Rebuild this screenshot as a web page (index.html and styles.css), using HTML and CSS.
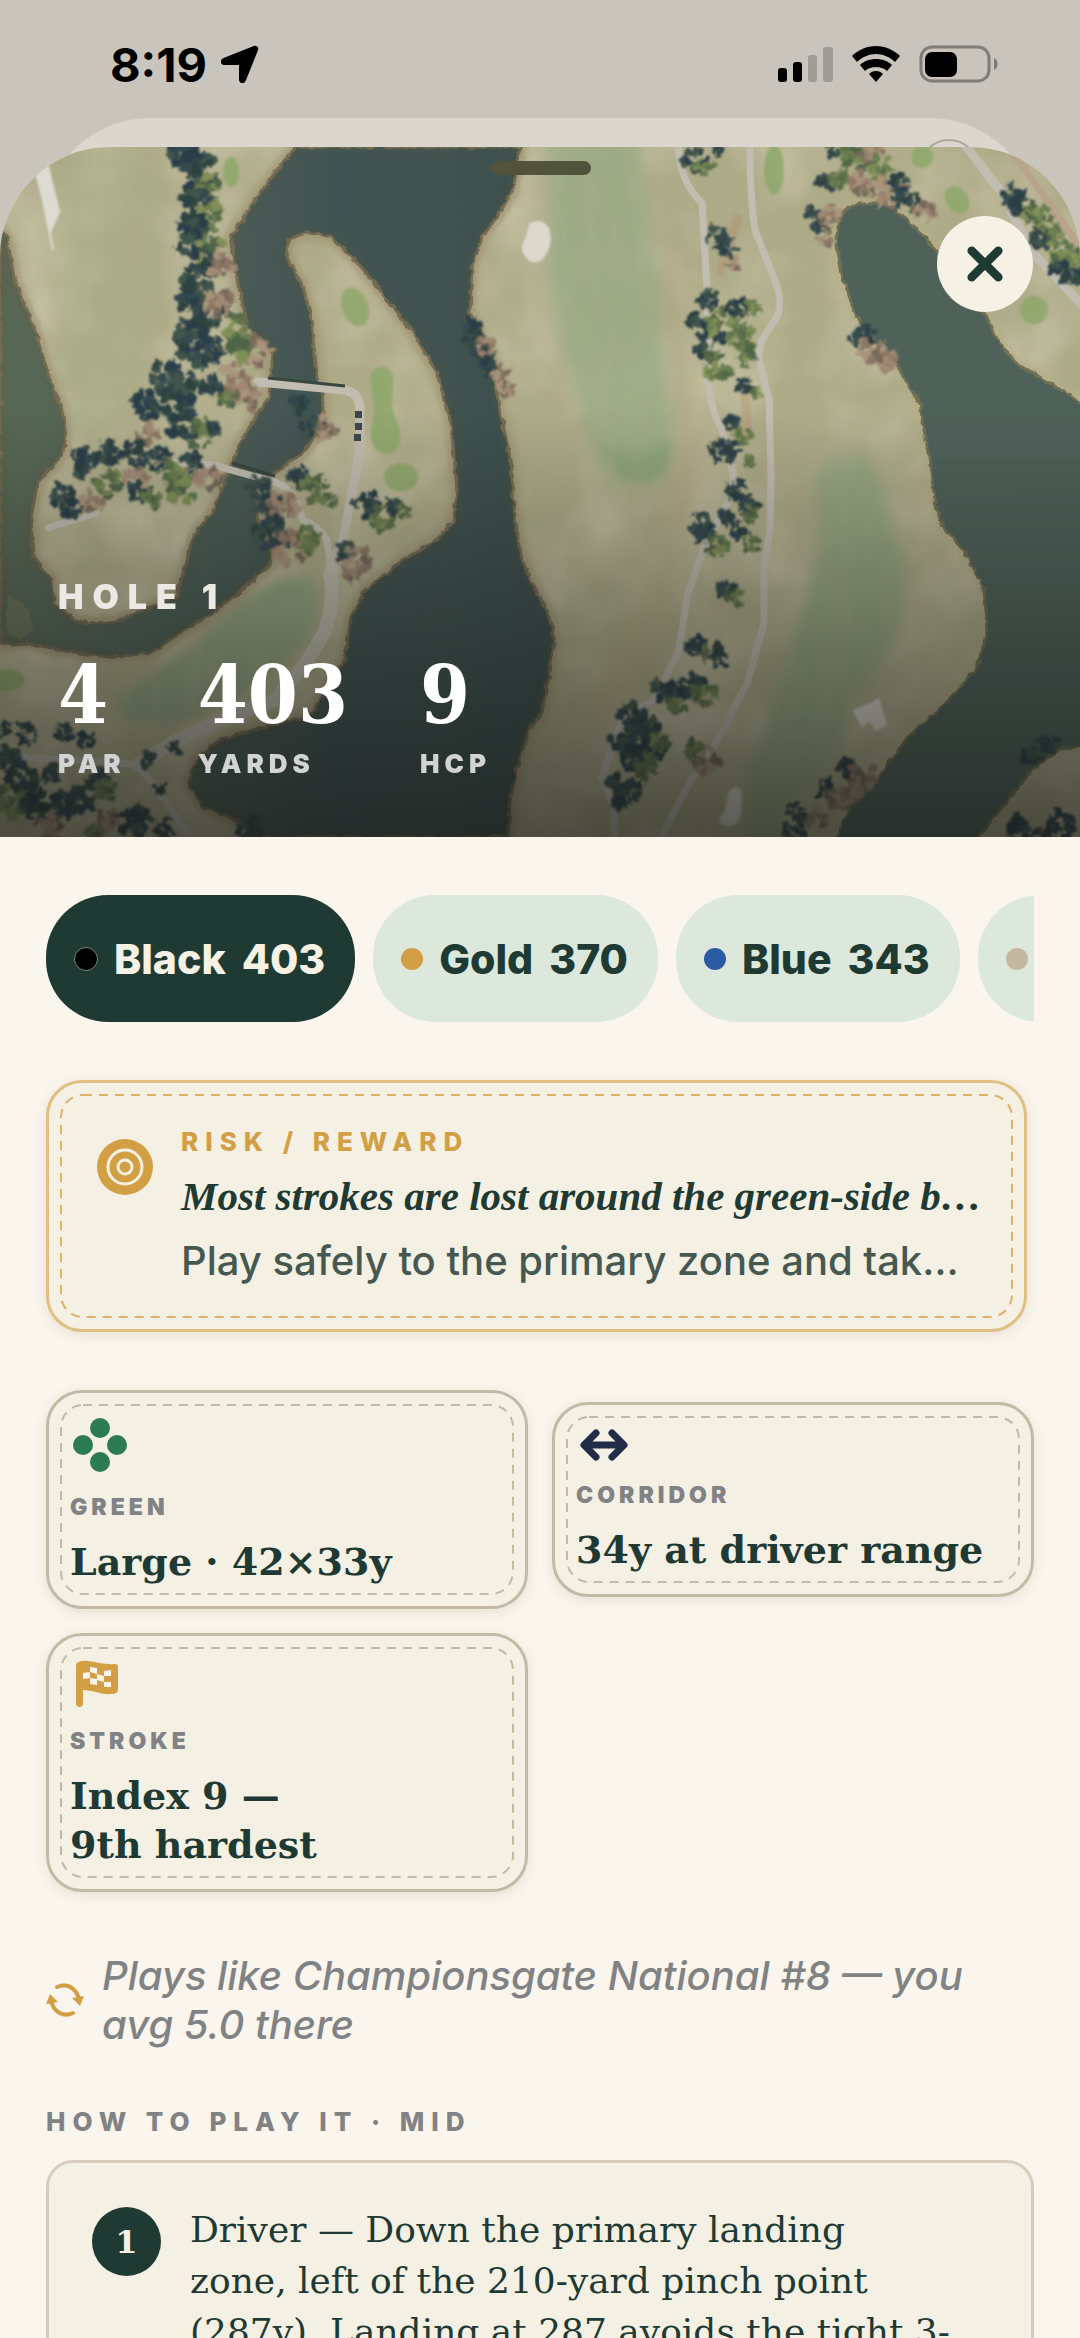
FILE: index.html
```html
<!DOCTYPE html>
<html lang="en">
<head>
  <meta charset="UTF-8">
  <meta name="viewport" content="width=device-width, initial-scale=1.0">
  <title>Hole 1</title>
  <link rel="stylesheet" href="styles.css">
</head>
<body>
  <div class="screen">
    <header class="status-bar">
      <div class="status-left">
        <span class="clock">8:19</span>
        <svg class="location" viewBox="0 0 38 38" aria-hidden="true">
          <path d="M36 5 24 35c-1 3-5 3-5-1V20c0-1 0-1-1-1H4c-4 0-4-4-1-5L33 2c2-1 4 1 3 3z" stroke="#000" stroke-width="2"/>
        </svg>
      </div>
      <svg class="status-icons" viewBox="0 0 222 38" aria-hidden="true">
        <rect x="0" y="23" width="9" height="14" rx="3"/>
        <rect x="15" y="17" width="9" height="20" rx="3"/>
        <rect x="30" y="10" width="9" height="27" rx="3" fill="#9f9d97"/>
        <rect x="45" y="2" width="10" height="35" rx="3" fill="#9f9d97"/>
        <path d="M98 1c-9 0-18 4-24 10l5 6c5-5 12-8 19-8s14 3 19 8l5-6C116 5 107 1 98 1z"/>
        <path d="M98 14c-6 0-12 2-16 6l5 6c3-3 7-4 11-4s8 1 11 4l5-6c-4-4-10-6-16-6z"/>
        <path d="M98 26c-3 0-5 1-7 3l7 8 7-8c-2-2-4-3-7-3z"/>
        <rect x="143" y="2" width="68" height="34" rx="11" fill="none" stroke="#7f7d78" stroke-width="3"/>
        <rect x="147" y="7" width="32" height="25" rx="7"/>
        <path d="M216 13c5 2 5 10 0 12z" fill="#7f7d78"/>
      </svg>
    </header>

    <!-- Sheet underneath the open one -->
    <div class="back-sheet">
      <span class="back-close"></span>
    </div>

    <main class="sheet">
      <section class="hero">
        <svg class="aerial" viewBox="0 147 1080 690" preserveAspectRatio="xMidYMid slice" aria-hidden="true">
          <defs>
            <filter id="rough" x="-5%" y="-5%" width="110%" height="110%">
              <feTurbulence type="fractalNoise" baseFrequency="0.12" numOctaves="2" seed="4" result="n"/>
              <feDisplacementMap in="SourceGraphic" in2="n" scale="6" xChannelSelector="R" yChannelSelector="G"/>
            </filter>
            <filter id="leafy" x="-5%" y="-5%" width="110%" height="110%">
              <feTurbulence type="fractalNoise" baseFrequency="0.14" numOctaves="2" seed="9" result="n"/>
              <feDisplacementMap in="SourceGraphic" in2="n" scale="11" xChannelSelector="R" yChannelSelector="G" result="d"/>
              <feGaussianBlur in="d" stdDeviation="1"/>
            </filter>
            <filter id="soft" x="-20%" y="-20%" width="140%" height="140%"><feGaussianBlur stdDeviation="8"/></filter>
            <filter id="haze"><feGaussianBlur stdDeviation="1.2"/></filter>
            <filter id="glow"><feGaussianBlur stdDeviation="4"/></filter>
            <filter id="streaks" x="0" y="0" width="100%" height="100%">
              <feTurbulence type="fractalNoise" baseFrequency="0.06 0.014" numOctaves="4" seed="12"/>
              <feColorMatrix values="0 0 0 0 0.42  0 0 0 0 0.43  0 0 0 0 0.28  2.2 0 0 0 -0.9"/>
            </filter>
            <filter id="patches" x="0" y="0" width="100%" height="100%">
              <feTurbulence type="fractalNoise" baseFrequency="0.012" numOctaves="3" seed="3"/>
              <feColorMatrix values="0 0 0 0 0.74  0 0 0 0 0.68  0 0 0 0 0.53  0 2.2 0 0 -0.8"/>
            </filter>
            <linearGradient id="water" x1="0" y1="0" x2="1" y2="0">
              <stop offset="0" stop-color="#5a6856"/>
              <stop offset="0.2" stop-color="#53655b"/>
              <stop offset="0.6" stop-color="#415452"/>
              <stop offset="1" stop-color="#3d504f"/>
            </linearGradient>
            <path id="lake" d="M296 147H520L513 190 497 217 482 237 472 267 470 313 480 338 492 357 499 407 510 457 515 517 520 553 530 580 540 597 550 620 554 643 547 687 540 717 530 727 517 767 510 800 508 837H262L238 820 203 807 189 783 196 760 220 740 262 727 310 717 344 660 351 617 365 590 399 563 437 540 453 521 457 490 451 423 437 373 413 333 382 293 358 263 331 237 306 232 289 240 287 258 303 287 310 313 317 373 322 390 324 423 306 450 275 473 255 487 258 523 272 550 272 563 241 590 213 613 179 633 152 653 107 657 59 650 28 643 0 645V230L7 237 15 283 34 327 48 373 62 410 66 436 62 455 38 482 31 517 33 557 52 580 54 603 79 623 114 622 145 610 176 597 182 577 193 537 213 510 224 483 241 440 269 397 272 350 248 327 238 283 231 237 255 200 275 173z"/>
            <path id="pond" d="M840 213 857 203H884L908 220 936 250 953 290 984 313 998 340 1015 363 1050 383 1085 405V745L1057 750 1032 770 1005 803 976 840H836L850 807 877 780 908 737 946 703 977 667 988 630 984 590 964 550 943 527 936 507 929 457 919 403 898 367 874 340 857 317 843 280 836 240z"/>
          </defs>

          <rect x="0" y="147" width="1080" height="690" fill="#aeab88"/>

          <!-- Mown fairways -->
          <rect x="0" y="147" width="1080" height="690" filter="url(#patches)" opacity="0.45"/>
          <g filter="url(#soft)" opacity="0.85">
            <path d="M547 130H638L650 223 660 307 667 373 672 455 654 485 619 487 598 467 581 413 560 340 547 273z" fill="#9aab83"/>
            <path d="M815 560V473L833 455H867L884 490 905 567 898 633 877 673 850 700 843 740 822 777 788 807 784 850H743L753 767 774 700 795 633z" fill="#93a680"/>
            <path d="M60 150H150L160 260 150 360 120 430 80 440 50 320z" fill="#a8af88" opacity="0.5"/>
            <path d="M655 180 675 260 690 380 700 480 680 560 655 680 610 720 560 760 660 560 680 420z" fill="#b3a985" opacity="0.8"/>
          </g>
          <path d="M282 577 312 578 319 600 310 640 241 697 172 723 124 720 118 697 193 647 241 603z" fill="#94a582" filter="url(#glow)"/>
          <path d="M600 445q14 36 44 36t26-40q-34 24-70 4z" fill="#86a373" opacity="0.6" filter="url(#glow)"/>
          <rect x="0" y="147" width="1080" height="690" filter="url(#streaks)" opacity="0.35"/>

          <!-- Water with a sandy bank -->
          <g filter="url(#rough)">
            <use href="#lake" fill="none" stroke="#b8ab88" stroke-width="14" opacity="0.6"/>
            <use href="#pond" fill="none" stroke="#b5ad84" stroke-width="12" opacity="0.5"/>
            <use href="#lake" fill="url(#water)" stroke="#7b715a" stroke-width="3"/>
            <use href="#pond" fill="#50625a" stroke="#6f6f54" stroke-width="3"/>
          </g>
          <g fill="none" stroke="#5f5a3e" stroke-width="8" opacity="0.35" filter="url(#glow)">
            <use href="#lake"/>
          </g>
          <path d="M8 595l16 8 10 26-14 12-14-10z" fill="#777b59" opacity="0.6" filter="url(#rough)"/>

          <!-- Tees and small greens -->
          <g fill="#8ba768" opacity="0.8" filter="url(#haze)">
            <ellipse cx="231" cy="172" rx="8" ry="15"/>
            <ellipse cx="355" cy="307" rx="13" ry="20" transform="rotate(-20 355 307)"/>
            <path d="M370 375q12-18 23 0l-1 32 8 24c6 28-30 32-29 2l3-24z"/>
            <ellipse cx="401" cy="477" rx="17" ry="14"/>
            <ellipse cx="774" cy="170" rx="10" ry="25"/>
            <circle cx="922" cy="157" r="11"/>
            <ellipse cx="957" cy="200" rx="11" ry="15" transform="rotate(-35 957 200)"/>
            <circle cx="1034" cy="310" r="14"/>
            <ellipse cx="7" cy="680" rx="17" ry="11"/>
          </g>

          <!-- Cart paths and bridges -->
          <g fill="none" stroke="#c1bdb0" stroke-linecap="round" stroke-linejoin="round">
            <g stroke-width="7">
              <path d="M678 140Q678 180 702 203L707 290V373Q710 410 722 430L733 473V493L719 520 703 550 688 593 678 653 654 700 623 717 602 777 614 807 615 840"/>
              <path d="M750 140Q750 200 755 230L776 283Q782 300 778 315L762 340Q756 355 762 372L769 400 771 473 770 530 764 567V623L747 683 716 743 691 780 662 835"/>
              <path d="M331 570 327 540Q318 525 303 520L296 500Q290 488 275 482L213 465 165 462"/>
              <path d="M0 753 30 758 110 762 138 765 172 810 189 837M48 528 96 513"/>
              <path d="M965 145 1002 193 1030 250 1082 305" stroke-width="9"/>
              <path d="M1010 150 1040 190 1080 248" stroke="#b8a48b"/>
            </g>
            <path d="M258 382 345 390Q360 393 360 410V450L342 545" stroke-width="9"/>
            <path d="M342 545 330 575Q336 600 324 633L306 663 275 700 220 720 172 743 138 765" stroke-width="14" opacity="0.85"/>
          </g>
          <path d="M268 378 345 386M232 463 275 476" stroke="#39453f" stroke-width="3" fill="none"/>
          <path d="M355 411h7v7h-7zM355 423h7v7h-7zM354 434h7v7h-7z" fill="#39474c"/>
          <path d="M35 170l13-4 11 46-8 18zM44 205l9 45" fill="#dddbd2" stroke="#dddbd2" stroke-width="2" filter="url(#haze)"/>

          <!-- Bunkers -->
          <g fill="#dcd8cb" filter="url(#haze)">
            <path d="M529 224q12-8 20 4 5 16-4 28-5 9-16 5-10-9-6-19 4-6 6-18z"/>
            <path d="M852 710q14-4 27-12l8 27-12 6q-3-8-7-9l-6 6z"/>
            <path d="M728 793q10-12 14 0l-1 20q-2 16-18 12-8-4 2-14z"/>
          </g>
          <path d="M739 215l-20 60M745 393l4 45" stroke="#b5835f" stroke-width="9" opacity="0.3" filter="url(#haze)"/>

          <g id="trees" filter="url(#leafy)"></g>
        </svg>

        <span class="grabber"></span>
        <button class="close-btn" type="button" aria-label="Close">
          <svg viewBox="0 0 40 40" aria-hidden="true"><path d="M6 6l28 28M34 6 6 34"/></svg>
        </button>

        <div class="hero-info">
          <h1 class="hole-name">HOLE 1</h1>
          <dl class="stats">
            <div class="stat"><dt>PAR</dt><dd>4</dd></div>
            <div class="stat"><dt>YARDS</dt><dd>403</dd></div>
            <div class="stat"><dt>HCP</dt><dd>9</dd></div>
          </dl>
        </div>
      </section>

      <div class="content">
        <div class="tees">
          <button class="tee active" type="button"><span class="dot black"></span>Black <span>403</span></button>
          <button class="tee" type="button"><span class="dot gold"></span>Gold <span>370</span></button>
          <button class="tee" type="button"><span class="dot blue"></span>Blue <span>343</span></button>
          <button class="tee" type="button" aria-label="More tees"><span class="dot sand"></span></button>
        </div>

        <section class="stitched risk">
          <svg class="stitch" aria-hidden="true"><rect width="100%" height="100%" rx="22"/></svg>
          <svg class="risk-icon" viewBox="0 0 56 56" aria-hidden="true">
            <circle cx="28" cy="28" r="28"/>
            <circle class="ring" cx="28" cy="28" r="17"/>
            <circle class="ring" cx="28" cy="28" r="7"/>
          </svg>
          <div class="risk-text">
            <h2 class="risk-label">RISK / REWARD</h2>
            <p class="risk-title">Most strokes are lost around the green-side b…</p>
            <p class="risk-body">Play safely to the primary zone and tak…</p>
          </div>
        </section>

        <div class="facts">
          <section class="stitched fact">
            <svg class="stitch" aria-hidden="true"><rect width="100%" height="100%" rx="22"/></svg>
            <svg class="fact-icon tall" viewBox="0 0 60 56" fill="#2c7c50" aria-hidden="true">
              <circle cx="30" cy="11" r="10"/>
              <circle cx="13" cy="28" r="10"/>
              <circle cx="47" cy="28" r="10"/>
              <circle cx="30" cy="45" r="10"/>
            </svg>
            <h3>GREEN</h3>
            <p>Large · 42×33y</p>
          </section>

          <section class="stitched fact">
            <svg class="stitch" aria-hidden="true"><rect width="100%" height="100%" rx="22"/></svg>
            <svg class="fact-icon short" viewBox="0 0 60 32" aria-hidden="true">
              <path d="M20 4 8 16l12 12M36 4l12 12-12 12M9 16h38" fill="none" stroke="#222c49" stroke-width="7" stroke-linecap="round" stroke-linejoin="round"/>
            </svg>
            <h3>CORRIDOR</h3>
            <p>34y at driver range</p>
          </section>

          <section class="stitched fact">
            <svg class="stitch" aria-hidden="true"><rect width="100%" height="100%" rx="22"/></svg>
            <svg class="fact-icon mid" viewBox="0 0 60 47" aria-hidden="true">
              <path d="M6 5c0-3 6-5 12-4 9 1 17 4 27 3 2 0 3 1 3 3v23c0 3-3 4-7 4-10 1-18-4-28-4v14c0 4-7 4-7 0z" fill="#d39f45"/>
              <path d="M13 13l7-1v6l-7 1zM20 7l7 1v6l-7-2zM20 18l7 1v6l-7-1zM27 14l7 2v6l-7-2zM34 11l7-1v6l-7 0zM34 22h7v5h-7z" fill="#faf5ed"/>
            </svg>
            <h3>STROKE</h3>
            <p>Index 9 —<br>9th hardest</p>
          </section>
        </div>

        <div class="similar">
          <svg class="loop" viewBox="0 0 38 34" aria-hidden="true">
            <path d="M11 4Q22-1 30 9l3 6M27 30Q16 35 8 25l-3-6" fill="none" stroke="#d39f45" stroke-width="4" stroke-linecap="round"/>
            <path d="M26 15l12-2-4 10zM0 21l4-10 8 8z" fill="#d39f45"/>
          </svg>
          <p>Plays like Championsgate National #8 — you avg 5.0 there</p>
        </div>

        <section class="plan">
          <h2 class="section-label">HOW TO PLAY IT · MID</h2>
          <ol class="steps">
            <li>
              <span class="step-no">1</span>
              <p>Driver — Down the primary landing<br>zone, left of the 210-yard pinch point<br>(287y). Landing at 287 avoids the tight 3-</p>
            </li>
          </ol>
        </section>
      </div>
    </main>
  </div>
  <script src="script.js"></script>
</body>
</html>
```

FILE: styles.css
```css
body {
  margin: 0;
  background-color: #c9c5bd;
  font-family: Inter, "Liberation Sans", sans-serif;
  color: #1f3a33;
}

h1, h2, h3, p, dl, dd, ol {
  margin: 0;
  padding: 0;
}

button {
  border: none;
  font-family: inherit;
  cursor: pointer;
}

.screen {
  display: flex;
  flex-direction: column;
  height: 100vh;
  overflow: hidden;
}

/* Status bar */
.status-bar {
  display: flex;
  flex: none;
  justify-content: space-between;
  align-items: center;
  box-sizing: border-box;
  height: 118px;
  padding: 10px 80px 0 110px;
}

.status-left {
  display: flex;
  align-items: center;
  gap: 14px;
}

.clock {
  font-size: 47px;
  font-weight: 700;
  color: #000;
}

.location {
  width: 38px;
  height: 38px;
}

.status-icons {
  width: 222px;
  height: 38px;
}

/* Sheets */
.back-sheet {
  position: relative;
  flex: none;
  height: 140px;
  margin: 0 41px -111px;
  border-radius: 110px 110px 0 0;
  background-color: #dbd7cf;
}

.back-close {
  position: absolute;
  top: 21px;
  right: 60px;
  width: 56px;
  height: 56px;
  border: 2px solid #aaa69e;
  border-radius: 50%;
}

.sheet {
  position: relative;
  flex: 1 0 auto;
  overflow: hidden;
  border-radius: 110px 110px 0 0;
  background-color: #faf5ed;
}

/* Hero */
.hero {
  position: relative;
  display: flex;
  align-items: flex-end;
  min-height: 690px;
}

.hero::after {
  content: "";
  position: absolute;
  inset: 0;
  background: linear-gradient(rgba(25, 25, 20, 0) 38%, rgba(20, 22, 20, 0.65));
}

.aerial {
  position: absolute;
  width: 100%;
  height: 100%;
}

.grabber {
  position: absolute;
  z-index: 1;
  top: 14px;
  left: 50%;
  width: 100px;
  height: 14px;
  margin-left: -49px;
  border-radius: 7px;
  background-color: #50523b;
}

.close-btn {
  position: absolute;
  z-index: 1;
  top: 69px;
  right: 47px;
  display: flex;
  align-items: center;
  justify-content: center;
  width: 96px;
  height: 96px;
  padding: 0;
  border-radius: 50%;
  background-color: #f5f1e5;
}

.close-btn svg {
  width: 38px;
  height: 38px;
  fill: none;
  stroke: #1f3a33;
  stroke-width: 9;
  stroke-linecap: round;
}

.hero-info {
  position: relative;
  z-index: 1;
  padding: 0 58px 57px;
}

.hole-name {
  margin-bottom: 30px;
  font-size: 34px;
  line-height: 40px;
  font-weight: 900;
  letter-spacing: 9px;
  color: #ebe9e3;
}

.stats {
  display: flex;
  gap: 72px;
}

.stat {
  display: flex;
  flex-direction: column-reverse;
}

.stat dt {
  font-size: 26px;
  line-height: 32px;
  font-weight: 900;
  letter-spacing: 5px;
  color: #d2d4d3;
}

.stat dd {
  margin-bottom: 5px;
  font-family: "DejaVu Serif Condensed", "DejaVu Serif", serif;
  font-size: 80px;
  line-height: 96px;
  font-weight: 700;
  color: #fff;
}

/* Body of the sheet */
.content {
  padding: 58px 46px;
}

.tees {
  display: flex;
  gap: 18px;
  overflow: hidden;
}

.tee {
  display: flex;
  flex: none;
  align-items: center;
  gap: 16px;
  min-width: 200px;
  height: 127px;
  padding: 0 30px 0 28px;
  border-radius: 62px;
  background-color: #dce8dc;
  font-size: 41px;
  font-weight: 800;
  color: #1f3a33;
}

.tee.active {
  background-color: #1f3a33;
  color: #f5f1e5;
}

.dot {
  width: 22px;
  height: 22px;
  border-radius: 50%;
}

.dot.black {
  border: 1px solid #7c8783;
  background-color: #000;
}

.dot.gold {
  background-color: #d39f45;
}

.dot.blue {
  background-color: #2c5ba5;
}

.dot.sand {
  background-color: #c5b8a0;
}

/* Cards with a stitched inner border */
.stitched {
  position: relative;
  box-sizing: border-box;
  border: 3px solid #c3baa6;
  border-radius: 36px;
  background-color: #f4f0e4;
  box-shadow: 0 3px 12px rgba(120, 100, 60, 0.14);
}

.stitch {
  position: absolute;
  top: 12px;
  left: 12px;
  width: calc(100% - 24px);
  height: calc(100% - 24px);
  overflow: visible;
}

.stitch rect {
  fill: none;
  stroke: #c3baa6;
  stroke-width: 2;
  stroke-dasharray: 9 7;
}

.risk {
  display: flex;
  gap: 28px;
  margin: 58px 7px 0 0;
  padding: 43px 30px 38px 48px;
  border-color: #e0bf85;
}

.risk .stitch rect {
  stroke: #ddb16a;
}

.risk-icon {
  flex: none;
  width: 56px;
  height: 56px;
  margin-top: 13px;
  fill: #d39f45;
}

.risk-icon .ring {
  fill: none;
  stroke: #f4f0e4;
  stroke-width: 3;
}

.risk-text {
  min-width: 0;
  white-space: nowrap;
}

.risk-label {
  font-size: 26px;
  line-height: 32px;
  font-weight: 800;
  letter-spacing: 7px;
  color: #d39f45;
}

.risk-title {
  margin-top: 12px;
  font-family: "Liberation Serif", serif;
  font-size: 41px;
  line-height: 52px;
  font-weight: 700;
  font-style: italic;
}

.risk-body {
  margin-top: 9px;
  font-size: 40px;
  line-height: 60px;
  font-weight: 500;
  color: #46584f;
}

.facts {
  display: grid;
  grid-template-columns: 1fr 1fr;
  align-items: center;
  gap: 24px;
  margin-top: 58px;
}

.fact {
  padding: 24px 21px 20px;
}

.fact-icon {
  display: block;
  width: 60px;
}

.fact-icon.tall {
  height: 56px;
}

.fact-icon.mid {
  height: 47px;
}

.fact-icon.short {
  height: 32px;
}

.fact h3 {
  margin-top: 20px;
  font-size: 23px;
  line-height: 28px;
  font-weight: 900;
  letter-spacing: 4px;
  color: #808284;
}

.fact p {
  margin-top: 16px;
  font-family: "DejaVu Serif", serif;
  font-size: 38px;
  line-height: 49px;
  font-weight: 700;
}

.similar {
  display: flex;
  align-items: center;
  gap: 18px;
  margin-top: 59px;
}

.similar p {
  font-size: 40px;
  line-height: 49px;
  font-weight: 500;
  font-style: italic;
  color: #808284;
}

.loop {
  flex: none;
  width: 38px;
  height: 34px;
}

.section-label {
  margin-top: 57px;
  font-size: 26px;
  line-height: 32px;
  font-weight: 800;
  letter-spacing: 7px;
  color: #808284;
}

.steps {
  margin-top: 22px;
  padding: 41px 43px;
  border: 3px solid #d6ccbc;
  border-radius: 27px;
  background-color: #f4f0e4;
  list-style: none;
}

.steps li {
  display: flex;
  gap: 29px;
}

.step-no {
  display: flex;
  flex: none;
  align-items: center;
  justify-content: center;
  width: 69px;
  height: 69px;
  margin-top: 3px;
  border-radius: 50%;
  background-color: #1f3a33;
  font-family: "DejaVu Serif", serif;
  font-size: 32px;
  font-weight: 700;
  color: #f5f1e5;
}

.steps p {
  font-family: "DejaVu Serif", serif;
  font-size: 36px;
  line-height: 51px;
}
```

FILE: script.js
```js
const trees = document.getElementById('trees');

const shades = {
  d: ['#2c3e48', '#344850', '#2f4340', '#3f544c'],
  g: ['#5c7048', '#6b7e50', '#4f6547', '#808f58'],
  b: ['#8e7765', '#a08873', '#75695a', '#a9957c']
};

// [x, y, radius, shade]: d = shadow, g = green crown, b = bare or rusty crown
const crowns = [
  // left bank
  [183, 153, 16, 'd'], [198, 172, 18, 'd'], [208, 186, 12, 'g'], [192, 200, 16, 'd'], [212, 215, 14, 'g'],
  [195, 226, 15, 'd'], [192, 245, 14, 'd'], [212, 250, 15, 'g'], [200, 262, 16, 'd'], [222, 265, 12, 'b'],
  [195, 295, 19, 'd'], [208, 310, 18, 'd'], [220, 305, 14, 'b'], [190, 340, 20, 'd'], [205, 352, 16, 'd'],
  [234, 330, 17, 'g'], [258, 352, 15, 'b'], [240, 348, 12, 'g'], [165, 378, 17, 'd'], [183, 388, 17, 'd'],
  [236, 378, 15, 'b'], [248, 396, 14, 'b'], [212, 388, 12, 'd'], [146, 404, 15, 'd'], [172, 408, 15, 'd'],
  [228, 398, 9, 'g'], [184, 428, 16, 'd'], [202, 433, 15, 'g'], [215, 428, 8, 'd'], [148, 434, 10, 'b'],
  [82, 461, 15, 'd'], [110, 455, 12, 'd'], [137, 452, 13, 'd'], [157, 458, 12, 'd'], [108, 483, 13, 'g'],
  [135, 478, 12, 'b'], [176, 475, 14, 'g'], [182, 488, 14, 'g'], [138, 490, 11, 'd'], [152, 500, 10, 'g'],
  [62, 494, 12, 'd'], [72, 505, 12, 'd'], [92, 500, 12, 'b'], [192, 462, 11, 'd'], [208, 478, 13, 'b'],
  // middle peninsula
  [303, 405, 11, 'd'], [312, 425, 12, 'd'], [326, 428, 11, 'b'], [302, 476, 12, 'd'], [314, 488, 13, 'g'],
  [330, 500, 8, 'g'], [258, 485, 11, 'd'], [268, 505, 13, 'd'], [283, 505, 14, 'b'], [272, 535, 16, 'd'],
  [290, 548, 16, 'b'], [309, 540, 13, 'g'], [368, 505, 13, 'd'], [382, 518, 12, 'g'], [393, 507, 8, 'd'],
  [403, 512, 7, 'g'], [345, 552, 10, 'd'], [358, 562, 15, 'b'], [353, 575, 8, 'b'],
  // lower left
  [5, 730, 8, 'd'], [25, 735, 11, 'd'], [65, 732, 9, 'd'], [86, 740, 9, 'd'], [148, 760, 8, 'd'],
  [175, 748, 6, 'd'], [8, 758, 14, 'd'], [22, 775, 15, 'd'], [52, 772, 10, 'd'], [100, 778, 12, 'd'],
  [10, 800, 17, 'g'], [35, 808, 16, 'd'], [60, 806, 15, 'd'], [82, 800, 14, 'd'], [105, 790, 11, 'g'],
  [50, 828, 13, 'b'], [110, 822, 12, 'b'], [135, 822, 15, 'd'], [95, 832, 10, 'g'], [160, 790, 7, 'd'],
  [165, 830, 10, 'd'], [250, 828, 13, 'd'],
  // far shore
  [470, 328, 10, 'd'], [476, 345, 12, 'd'], [487, 345, 9, 'b'], [488, 365, 11, 'd'], [501, 374, 10, 'b'],
  [506, 390, 8, 'b'],
  // between the fairways
  [694, 160, 12, 'd'], [704, 165, 9, 'g'], [718, 150, 6, 'd'], [716, 236, 11, 'd'], [728, 248, 10, 'd'],
  [733, 263, 7, 'b'], [708, 300, 10, 'd'], [702, 325, 14, 'd'], [710, 345, 14, 'd'], [722, 325, 15, 'g'],
  [738, 308, 11, 'd'], [752, 308, 8, 'g'], [742, 340, 14, 'g'], [718, 365, 14, 'g'], [748, 360, 9, 'g'],
  [745, 386, 8, 'd'], [756, 394, 6, 'g'], [732, 425, 9, 'd'], [744, 435, 9, 'g'], [722, 450, 12, 'd'],
  [735, 450, 9, 'd'], [750, 462, 6, 'g'], [736, 493, 12, 'd'], [748, 505, 11, 'd'], [750, 515, 9, 'g'],
  [725, 518, 8, 'd'], [738, 530, 9, 'd'], [752, 543, 9, 'g'], [700, 523, 11, 'd'], [706, 535, 12, 'd'],
  [718, 545, 11, 'g'], [726, 590, 11, 'd'], [738, 598, 8, 'g'], [696, 646, 11, 'd'], [708, 655, 9, 'g'],
  [719, 655, 11, 'd'], [665, 690, 14, 'd'], [678, 702, 10, 'g'], [692, 688, 14, 'd'], [704, 692, 12, 'g'],
  [632, 718, 14, 'd'], [645, 726, 14, 'd'], [622, 742, 12, 'd'], [634, 754, 15, 'd'], [652, 750, 14, 'd'],
  [660, 742, 10, 'g'], [648, 768, 12, 'g'], [615, 780, 9, 'd'], [628, 792, 12, 'd'], [622, 802, 9, 'd'],
  [694, 750, 11, 'g'], [706, 760, 13, 'b'],
  // round the right pond
  [832, 150, 8, 'd'], [855, 155, 15, 'g'], [872, 152, 10, 'b'], [880, 168, 11, 'g'], [824, 184, 9, 'd'],
  [840, 180, 9, 'g'], [862, 186, 13, 'b'], [880, 190, 14, 'b'], [894, 194, 13, 'b'], [907, 200, 12, 'd'],
  [812, 212, 7, 'd'], [820, 224, 8, 'd'], [830, 214, 10, 'b'], [826, 238, 8, 'b'], [898, 182, 10, 'd'],
  [924, 214, 11, 'b'], [1012, 196, 12, 'd'], [1022, 208, 12, 'd'], [1035, 215, 12, 'g'], [1048, 228, 13, 'g'],
  [1040, 240, 11, 'd'], [1058, 248, 14, 'g'], [1070, 262, 13, 'g'], [1060, 272, 10, 'd'], [1076, 280, 10, 'd'],
  [862, 336, 12, 'd'], [872, 350, 12, 'b'], [885, 358, 12, 'b'],
  [848, 768, 11, 'd'], [862, 776, 14, 'b'], [825, 790, 10, 'd'], [838, 798, 13, 'b'], [852, 790, 11, 'b'],
  [795, 812, 9, 'd'], [802, 824, 11, 'd'], [818, 820, 11, 'b'], [790, 832, 9, 'd'],
  [1032, 755, 10, 'd'], [1048, 745, 9, 'd'], [1018, 828, 13, 'd'], [1060, 825, 14, 'd'], [1040, 838, 9, 'd']
];

// Same pattern on every load
let seed = 7;
function random() {
  seed = (seed * 16807) % 2147483647;
  return seed / 2147483647;
}

crowns.forEach(([x, y, r, shade]) => {
  for (let i = 0; i < 24; i++) {
    const angle = random() * Math.PI * 2;
    const spread = r * Math.sqrt(random());
    const leaf = document.createElementNS('http://www.w3.org/2000/svg', 'circle');
    leaf.setAttribute('cx', Math.round(x + Math.cos(angle) * spread));
    leaf.setAttribute('cy', Math.round(y + Math.sin(angle) * spread));
    leaf.setAttribute('r', Math.max(2, Math.round(r * (0.15 + random() * 0.22))));
    leaf.setAttribute('fill', shades[shade][Math.floor(random() * 4)]);
    trees.appendChild(leaf);
  }
});
```
